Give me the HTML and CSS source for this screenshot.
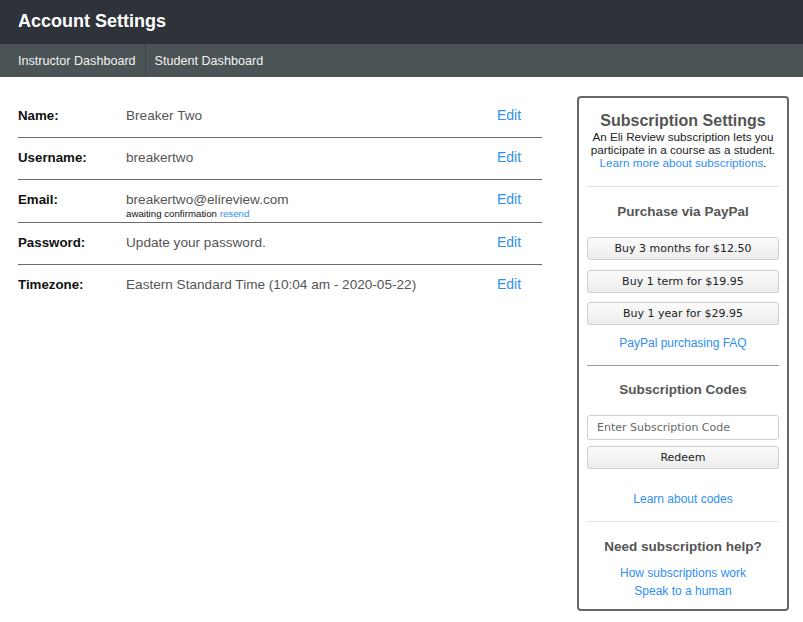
FILE: index.html
```html
<!DOCTYPE html>
<html>
<head>
<meta charset="utf-8">
<link rel="stylesheet" href="styles.css">
</head>
<body>
<header class="topbar"><h1 class="title">Account Settings</h1></header>
<nav class="nav">
  <a class="nav-item first">Instructor Dashboard</a>
  <a class="nav-item">Student Dashboard</a>
</nav>
<main class="main">
  <section class="fields">
    <div class="row">
      <div class="label">Name:</div>
      <div class="value">Breaker Two</div>
      <a class="edit">Edit</a>
    </div>
    <div class="row">
      <div class="label">Username:</div>
      <div class="value">breakertwo</div>
      <a class="edit">Edit</a>
    </div>
    <div class="row row-email">
      <div class="label">Email:</div>
      <div class="value">breakertwo@elireview.com
        <div class="note">awaiting confirmation <a class="link">resend</a></div>
      </div>
      <a class="edit">Edit</a>
    </div>
    <div class="row">
      <div class="label">Password:</div>
      <div class="value">Update your password.</div>
      <a class="edit">Edit</a>
    </div>
    <div class="row last">
      <div class="label">Timezone:</div>
      <div class="value">Eastern Standard Time (10:04 am - 2020-05-22)</div>
      <a class="edit">Edit</a>
    </div>
  </section>
  <aside class="panel">
    <h2 class="panel-title">Subscription Settings</h2>
    <p class="desc">An Eli Review subscription lets you participate in a course as a student.<br><a class="link">Learn more about subscriptions</a>.</p>
    <hr class="rule light">
    <h3 class="sub">Purchase via PayPal</h3>
    <div class="buttons">
      <button class="btn">Buy 3 months for $12.50</button>
      <button class="btn">Buy 1 term for $19.95</button>
      <button class="btn">Buy 1 year for $29.95</button>
    </div>
    <a class="link center faq">PayPal purchasing FAQ</a>
    <hr class="rule dark">
    <h3 class="sub codes-title">Subscription Codes</h3>
    <input class="code" type="text" placeholder="Enter Subscription Code">
    <button class="btn redeem">Redeem</button>
    <a class="link center codes">Learn about codes</a>
    <hr class="rule light second">
    <h3 class="sub help">Need subscription help?</h3>
    <a class="link center">How subscriptions work</a>
    <a class="link center">Speak to a human</a>
  </aside>
</main>
</body>
</html>
```
FILE: styles.css
```css
* { box-sizing: border-box; }
html, body { margin: 0; padding: 0; background: #fff; }
body { font-family: "Liberation Sans", Arial, sans-serif; color: #222; }

.topbar { background: #2d3339; height: 44px; display: flex; align-items: center; padding: 0 18px; }
.title { margin: 0; color: #fff; font-size: 18px; font-weight: bold; line-height: 1; position: relative; top: -1px; }

.nav { background: #4b5356; height: 33px; display: flex; align-items: stretch; }
.nav-item { color: #f2f2f2; font-size: 12.6px; display: flex; align-items: center; padding: 0 9px; border-right: 1px solid #3e4548; }
.nav-item.first { padding-left: 18px; }
.nav-item:last-child { border-right: none; }

.main { display: flex; align-items: flex-start; padding: 19px 14px 0 18px; justify-content: space-between; }

.fields { width: 524px; }
.row { display: flex; align-items: flex-start; height: 42px; border-bottom: 1px solid #6b6b6b; padding-top: 11px; }
.row.last { border-bottom: none; }
.row-email { height: 43px; }
.label { width: 108px; font-weight: bold; font-size: 13.3px; color: #111; line-height: 16px; padding-top: 1px; }
.value { flex: 1; font-size: 13.6px; color: #555; line-height: 16px; padding-top: 1px; }
.note { font-size: 9.7px; color: #111; line-height: 12px; margin-top: 0; }
.edit { width: 45px; font-size: 14px; color: #2f8ff0; line-height: 16px; }

.link { color: #2f8ff0; }

.panel { width: 212px; border: 2px solid #666; border-radius: 4px; padding: 13px 8px 9px; display: flex; flex-direction: column; align-items: stretch; }
.panel-title { margin: 0; text-align: center; font-size: 16px; font-weight: bold; color: #555; line-height: 20px; }
.desc { margin: -1px 0 0; text-align: center; font-size: 11.7px; line-height: 13px; color: #222; }
.rule { border: none; margin: 0; height: 1px; width: 100%; }
.rule.light { background: #e3e3e3; margin-top: 17px; }
.rule.light.second { margin-top: 13px; }
.rule.dark { background: #9a9a9a; margin-top: 13px; }
.sub { margin: 17px 0 0; text-align: center; font-size: 13.5px; font-weight: bold; color: #555; line-height: 16px; }
.sub.codes-title { margin-top: 16px; }
.buttons { display: flex; flex-direction: column; gap: 10px; margin-top: 17px; }
.btn { font-family: "DejaVu Sans", Verdana, sans-serif; font-size: 11px; color: #222; height: 23px; width: 100%; background: linear-gradient(#fbfbfb, #ececec); border: 1px solid #cfcfcf; border-radius: 3px; padding: 0; }
.buttons .btn:last-child { margin-top: -1px; }
.center { display: block; text-align: center; font-size: 12px; line-height: 18px; }
.faq { margin-top: 9px; }
.code { margin-top: 17px; height: 25px; width: 100%; border: 1px solid #cfcfcf; border-radius: 3px; font-family: "DejaVu Sans", Verdana, sans-serif; font-size: 11px; padding: 0 9px; color: #222; }
.code::placeholder { color: #666; }
.redeem { margin-top: 6px; }
.codes { margin-top: 21px; }
.help + .link { margin-top: 9px; }
```
